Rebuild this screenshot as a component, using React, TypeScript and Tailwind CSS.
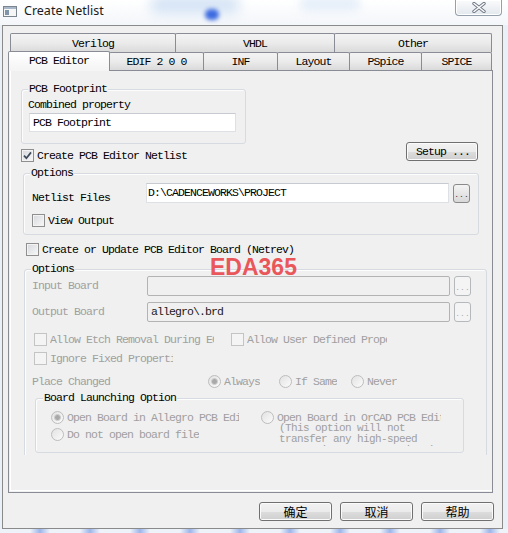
import React from 'react'

const G = 'text-[#a0a0a0]'

const btnFace =
  'rounded-[3px] border border-[#707070] bg-[linear-gradient(#f2f2f2_0%,#ebebeb_50%,#dddddd_51%,#cfcfcf_100%)] shadow-[inset_0_0_0_1px_#fbfbfb]'

function Check({ label, checked = false, disabled = false, textW = '' }: { label: string; checked?: boolean; disabled?: boolean; textW?: string }) {
  return (
    <div className="flex items-center h-[13px]">
      <span
        className={`w-[13px] h-[13px] shrink-0 border flex items-center justify-center ${
          disabled ? 'border-[#c4c4c4] bg-[#f4f4f4]' : 'border-[#8f8f8f] bg-gradient-to-br from-[#d6d8dc] to-[#f8f8f8] shadow-[inset_0_0_0_1px_#f3f3f3]'
        }`}
      >
        {checked && (
          <svg width="9" height="9" viewBox="0 0 9 9">
            <path d="M1 4.6 L3.4 7.2 L8 1.4" fill="none" stroke="#3e4a5a" strokeWidth="1.7" />
          </svg>
        )}
      </span>
      <span className={`ml-[3px] whitespace-nowrap overflow-hidden ${textW} ${disabled ? G : ''}`}>{label}</span>
    </div>
  )
}

function Radio({ label, on = false, textW = '' }: { label: string; on?: boolean; textW?: string }) {
  return (
    <div className="flex items-center h-[13px]">
      <span className="w-[13px] h-[13px] shrink-0 rounded-full border border-[#bdbdbd] bg-gradient-to-br from-[#e2e2e2] to-[#fbfbfb] flex items-center justify-center">
        {on && <span className="w-[7px] h-[7px] rounded-full bg-[#a9a9a9] border border-[#cfcfcf]" />}
      </span>
      <span className={`ml-[3px] whitespace-nowrap overflow-hidden ${G} ${textW}`}>{label}</span>
    </div>
  )
}

function Browse({ disabled = false, h = 'h-[19px]' }: { disabled?: boolean; h?: string }) {
  return (
    <div
      className={`w-[17px] ${h} shrink-0 rounded-[3px] border flex items-end justify-center pb-[3px] text-[8px] leading-[8px] tracking-normal ${
        disabled ? 'border-[#b5b9bc] bg-[#f4f4f4] text-[#a8a8a8]' : 'border-[#8a8a8a] bg-gradient-to-b from-[#f4f4f4] to-[#d8d8d8] text-[#333]'
      }`}
    >
      ...
    </div>
  )
}

function Field({ value = '', disabled = false, className = '' }: { value?: string; disabled?: boolean; className?: string }) {
  return (
    <div
      className={`shrink-0 flex items-center pl-[3px] whitespace-nowrap ${
        disabled ? 'bg-[#f0f0f0] border border-[#b3b3b3] rounded-[2px]' : 'bg-white border border-[#dde1e6] border-t-[#c7cbd1]'
      } ${className}`}
    >
      {value}
    </div>
  )
}

function Group({ legend, className = '', lm = 'ml-[6px]', children }: { legend: string; className?: string; lm?: string; children?: React.ReactNode }) {
  return (
    <div className={`border border-[#d5dbe1] rounded-[3px] shadow-[inset_1px_1px_0_#fdfdfd] flex flex-col shrink-0 ${className}`}>
      <span className={`self-start -mt-[7px] ${lm} px-[1px] bg-[#f0f0f0] leading-[12px]`}>{legend}</span>
      {children}
    </div>
  )
}

function Tab({ label, w, sel = false }: { label: string; w: string; sel?: boolean }) {
  if (sel)
    return (
      <div className={`${w} -mt-[1px] h-[20px] relative z-10 border border-b-0 border-[#898c95] rounded-t-[2px] bg-gradient-to-b from-white to-[#f4f4f4] flex items-center justify-center pb-[1px]`}>
        {label}
      </div>
    )
  return (
    <div className={`${w} -ml-px first:ml-0 h-full border border-b-0 border-[#898c95] rounded-t-[2px] bg-gradient-to-b from-[#f3f3f3] via-[#ebebeb] to-[#dadada] flex items-center justify-center pt-[1px]`}>
      {label}
    </div>
  )
}

export default function App() {
  return (
    <div className="relative w-[508px] h-[533px] overflow-hidden bg-[#eaf0f7] flex flex-col font-['Liberation_Mono',monospace] text-[11.5px] leading-[12px] tracking-[-0.9px] text-black">
      {/* title bar */}
      <div className="relative h-[25px] shrink-0 flex items-start bg-gradient-to-b from-white to-[#f3f6fa] overflow-hidden">
        <div className="absolute left-[150px] top-[-4px] w-[90px] h-[18px] rounded-full bg-[#d6e4f5] blur-[6px]" />
        <div className="absolute left-[205px] top-[9px] w-[14px] h-[11px] rounded-full bg-[#3d6be0] blur-[2px]" />
        <div className="absolute left-[300px] top-[-2px] w-[60px] h-[12px] rounded-full bg-[#e2ecf8] blur-[5px]" />
        <svg className="relative ml-[3px] mt-[6px]" width="14" height="11" viewBox="0 0 14 11">
          <rect x="0.5" y="0.5" width="13" height="10" fill="#f6f6f6" stroke="#7b8590" />
          <rect x="1" y="1" width="12" height="2" fill="#a8b8c9" />
          <rect x="2" y="4" width="4" height="5" fill="#8195aa" />
        </svg>
        <span className="relative ml-[7px] mt-[2px] font-['Noto_Sans',sans-serif] text-[12.5px] leading-[17px] tracking-normal text-[#1b1b1b]">
          Create Netlist
        </span>
        <div className="relative ml-auto mr-[6px] w-[47px] h-[16px] border border-t-0 border-[#95a0ae] rounded-b-[4px] bg-gradient-to-b from-[#fafbfc] to-[#e3e8ee] shadow-[inset_0_0_0_1px_#ffffff] flex items-center justify-center">
          <svg width="14" height="11" viewBox="0 0 14 11">
            <path d="M2 1.5 L12 9.5 M12 1.5 L2 9.5" stroke="#6d7684" strokeWidth="3.4" strokeLinecap="round" />
            <path d="M2 1.5 L12 9.5 M12 1.5 L2 9.5" stroke="#fdfdfd" strokeWidth="1.6" strokeLinecap="round" />
          </svg>
        </div>
      </div>

      {/* client area */}
      <div className="ml-[2px] w-[501px] h-[504px] shrink-0 border border-[#8a8a8a] bg-[#f0f0f0] flex flex-col">
        <div className="ml-[5px] mt-[7px] w-[485px] flex flex-col">
          <div className="ml-[2px] h-[19px] flex">
            <Tab label="Verilog" w="w-[166px]" />
            <Tab label="VHDL" w="w-[160px]" />
            <Tab label="Other" w="w-[158px]" />
          </div>
          <div className="h-[18px] flex">
            <Tab label="PCB Editor" w="w-[102px]" sel />
            <Tab label="EDIF 2 0 0" w="w-[95px]" />
            <Tab label="INF" w="w-[75px]" />
            <Tab label="Layout" w="w-[73px]" />
            <Tab label="PSpice" w="w-[73px]" />
            <Tab label="SPICE" w="w-[71px]" />
          </div>

          {/* tab page */}
          <div className="h-[423px] border border-[#898c95] bg-[#f0f0f0] shadow-[inset_2px_-2px_0_-1px_#f0f0f0,inset_3px_-3px_0_-1px_#ffffff]">
            <div className="relative h-[384px] overflow-hidden flex flex-col">
              <Group legend="PCB Footprint" className="mt-[18px] ml-[12px] w-[225px] h-[55px]">
                <span className="mt-[4px] ml-[6px]">Combined property</span>
                <Field value="PCB Footprint" className="mt-[2px] ml-[7px] w-[207px] h-[19px]" />
              </Group>

              <div className="-mt-[2px] h-[20px] flex items-start shrink-0">
                <div className="ml-[12px] mt-[7px]">
                  <Check label="Create PCB Editor Netlist" checked />
                </div>
                <div className={`ml-auto mr-[14px] w-[72px] h-[19px] flex items-center justify-center pl-[2px] ${btnFace}`}>Setup ...</div>
              </div>

              <Group legend="Options" className="mt-[11px] ml-[14px] w-[456px] h-[62px]">
                <div className="mt-[4px] flex items-start h-[20px]">
                  <span className="ml-[8px] w-[114px] mt-[9px]">Netlist Files</span>
                  <Field value={'D:\\CADENCEWORKS\\PROJECT'} className="w-[303px] h-[20px] !pl-[1px]" />
                  <div className="ml-[4px] mt-[1px]">
                    <Browse />
                  </div>
                </div>
                <div className="mt-[11px] ml-[8px]">
                  <Check label="View Output" />
                </div>
              </Group>

              <div className="mt-[8px] ml-[17px]">
                <Check label="Create or Update PCB Editor Board (Netrev)" />
              </div>

              <Group legend="Options" className="mt-[13px] ml-[15px] w-[463px] h-[220px]">
                <div className="mt-[1px] flex items-center h-[20px]">
                  <span className={`ml-[7px] w-[115px] ${G}`}>Input Board</span>
                  <Field disabled className="w-[303px] h-[20px]" />
                  <div className="ml-[4px]">
                    <Browse disabled h="h-[20px]" />
                  </div>
                </div>
                <div className="mt-[6px] flex items-center h-[20px]">
                  <span className={`ml-[7px] w-[115px] ${G}`}>Output Board</span>
                  <Field disabled value={'allegro\\.brd'} className="w-[303px] h-[20px] text-[#1a1a1a]" />
                  <div className="ml-[4px]">
                    <Browse disabled h="h-[20px]" />
                  </div>
                </div>
                <div className="mt-[11px] flex">
                  <div className="ml-[9px] w-[197px]">
                    <Check label="Allow Etch Removal During ECO" disabled textW="w-[164px]" />
                  </div>
                  <Check label="Allow User Defined Properties" disabled textW="w-[140px]" />
                </div>
                <div className="mt-[6px] ml-[9px]">
                  <Check label="Ignore Fixed Properties" disabled textW="w-[123px]" />
                </div>
                <div className="mt-[10px] flex items-center h-[13px]">
                  <span className={`ml-[7px] w-[176px] ${G}`}>Place Changed</span>
                  <div className="w-[71px]">
                    <Radio label="Always" on />
                  </div>
                  <div className="w-[72px]">
                    <Radio label="If Same" />
                  </div>
                  <Radio label="Never" />
                </div>

                <Group legend="Board Launching Option" lm="ml-[7px]" className="mt-[10px] ml-[10px] w-[429px] h-[55px]">
                  <div className="flex h-[42px] overflow-hidden">
                    <div className="ml-[15px] w-[210px] flex flex-col">
                      <div className="mt-[7px]">
                        <Radio label="Open Board in Allegro PCB Editor" on textW="w-[172px]" />
                      </div>
                      <div className="mt-[4px]">
                        <Radio label="Do not open board file" />
                      </div>
                    </div>
                    <div className="flex flex-col">
                      <div className="mt-[7px]">
                        <Radio label="Open Board in OrCAD PCB Editor" textW="w-[164px]" />
                      </div>
                      <div className={`ml-[18px] -mt-[1px] text-[11px] tracking-[-0.6px] leading-[11px] ${G}`}>
                        <div>(This option will not</div>
                        <div>transfer any high-speed</div>
                        <div>properties or constraints)</div>
                      </div>
                    </div>
                  </div>
                </Group>
              </Group>

              <span className="absolute left-[201px] top-[185px] font-['Liberation_Sans',sans-serif] font-bold text-[23px] leading-[23px] tracking-normal text-[#e9575b]">
                EDA365
              </span>
            </div>
          </div>
        </div>

        <div className="mt-[9px] pr-[8px] flex justify-end gap-[8px] font-['Noto_Sans_CJK_SC',sans-serif] text-[12px] tracking-normal">
          {['确定', '取消', '帮助'].map((t) => (
            <div key={t} className={`w-[73px] h-[19px] flex items-center justify-center ${btnFace}`}>
              {t}
            </div>
          ))}
        </div>
      </div>

      <div className="h-[5px] shrink-0 bg-[repeating-linear-gradient(90deg,#eef3f9_0px,#eef3f9_30px,#9db5ea_40px,#eef3f9_50px)]" />
    </div>
  )
}
